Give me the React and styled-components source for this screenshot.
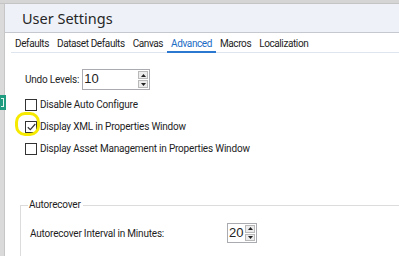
import React from "react";
import styled, { createGlobalStyle } from "styled-components";

const Global = createGlobalStyle`
  html, body { margin: 0; padding: 0; background: #ffffff; }
  body { width: 399px; height: 256px; overflow: hidden; font-family: Roboto, "Noto Sans", sans-serif; color: #1e1e1e; }
  * { box-sizing: border-box; }
`;

const Page = styled.div`
  width: 399px;
  height: 256px;
  display: flex;
  flex-direction: column;
  overflow: hidden;
`;

const TopStrip = styled.div`
  height: 4px;
  background: #d5d5d5;
  border-bottom: 1px solid #c4c4c4;
  flex: none;
`;

const Body = styled.div`
  flex: 1;
  display: flex;
  min-height: 0;
`;

const SideStrip = styled.div`
  width: 4px;
  flex: none;
  background: #dadada;
  display: flex;
  flex-direction: column;
  padding-top: 91px;
`;

const AppIcon = styled.div`
  width: 6px;
  height: 15px;
  background: #1f9c80;
  padding: 3px 0 3px 1px;
  z-index: 1;
  & > span { display: block; height: 100%; width: 3px; border: 1px solid #e3f5ef; border-left: none; }
`;

const Dialog = styled.div`
  flex: 1;
  display: flex;
  flex-direction: column;
  border-left: 1px solid #c6c6c6;
  background: #ffffff;
`;

const TitleBar = styled.div`
  height: 29px;
  flex: none;
  background: #eef2f8;
  border-bottom: 1px solid #c5c9cf;
  display: flex;
  align-items: center;
  padding-left: 17px;
  font-family: "Noto Sans", sans-serif;
  font-size: 14.5px;
  color: #262626;
`;

const TabStrip = styled.div`
  display: flex;
  margin: 3px 0 0 6px;
  height: 17px;
  border-bottom: 1px solid #dfe5ef;
`;

const Tab = styled.div`
  padding: 0 4px;
  font-size: 10px;
  letter-spacing: -0.4px;
  line-height: 15px;
  color: ${(p) => (p.$active ? "#1a6bc4" : "#1e1e1e")};
  border-bottom: 2px solid ${(p) => (p.$active ? "#2a78cf" : "transparent")};
  margin-bottom: -1px;
  white-space: nowrap;
`;

const Content = styled.div`
  display: flex;
  flex-direction: column;
  padding: 16px 0 0 20px;
`;

const FieldRow = styled.div`
  display: flex;
  align-items: center;
  gap: 3px;
  font-size: 10px;
  letter-spacing: -0.2px;
`;

const SpinBox = styled.div`
  width: ${(p) => p.$w}px;
  height: ${(p) => p.$h}px;
  border: 1px solid #a9abb0;
  display: flex;
  background: #fff;
`;

const SpinValue = styled.div`
  flex: 1;
  font-size: ${(p) => p.$fs}px;
  letter-spacing: 0;
  line-height: 1;
  padding: 2px 0 0 1px;
  color: #222;
  font-family: "Liberation Sans", "Noto Sans", sans-serif;
`;

const SpinButtons = styled.div`
  width: 11px;
  display: flex;
  flex-direction: column;
  gap: 1px;
  padding: 1px 1px 1px 0;
`;

const SpinBtn = styled.div`
  flex: 1;
  background: #ececec;
  border: 1px solid #b9b9b9;
  display: flex;
  align-items: center;
  justify-content: center;
`;

const Arrow = ({ up }) => (
  <svg width="5" height="3" viewBox="0 0 5 3">
    <path d={up ? "M0 3 L2.5 0 L5 3 Z" : "M0 0 L2.5 3 L5 0 Z"} fill="#222" />
  </svg>
);

const Spin = ({ value, w, h, fs }) => (
  <SpinBox $w={w} $h={h}>
    <SpinValue $fs={fs}>{value}</SpinValue>
    <SpinButtons>
      <SpinBtn><Arrow up /></SpinBtn>
      <SpinBtn><Arrow /></SpinBtn>
    </SpinButtons>
  </SpinBox>
);

const CheckList = styled.div`
  display: flex;
  flex-direction: column;
  gap: 9px;
  margin-top: 8px;
`;

const CheckRow = styled.label`
  display: flex;
  align-items: center;
  gap: 3px;
  font-size: 10px;
  letter-spacing: -0.2px;
  line-height: 13px;
  position: relative;
`;

const Box = styled.span`
  width: 12px;
  height: 12px;
  border: 1px solid #333;
  background: #fff;
  display: flex;
  align-items: center;
  justify-content: center;
  flex: none;
`;

const Highlight = styled.span`
  position: absolute;
  left: -10px;
  top: -8px;
  width: 25px;
  height: 24px;
  border: 3px solid #f5ea00;
  border-radius: 10px;
  pointer-events: none;
`;

const Check = ({ checked, highlight, children }) => (
  <CheckRow>
    {highlight && <Highlight />}
    <Box>
      {checked && (
        <svg width="9" height="8" viewBox="0 0 9 8">
          <path d="M0.8 4.2 L3.3 6.6 L8.3 1" fill="none" stroke="#333" strokeWidth="1.2" />
        </svg>
      )}
    </Box>
    <span>{children}</span>
  </CheckRow>
);

const Group = styled.fieldset`
  margin: 44px 0 0 15px;
  padding: 12px 0 20px 9px;
  border: none;
  border-top: 1px solid #dcdcdc;
  border-left: 1px solid #dcdcdc;
  font-size: 10px;
  letter-spacing: -0.2px;
`;

const Legend = styled.legend`
  padding: 0 2px 0 1px;
  margin-left: -2px;
  font-size: 10px;
  line-height: 12px;
`;

const GroupRow = styled.div`
  display: flex;
  align-items: center;
  & > span { width: 197px; }
`;

export default function App() {
  const tabs = ["Defaults", "Dataset Defaults", "Canvas", "Advanced", "Macros", "Localization"];
  return (
    <Page>
      <Global />
      <TopStrip />
      <Body>
        <SideStrip>
          <AppIcon><span /></AppIcon>
        </SideStrip>
        <Dialog>
          <TitleBar>User Settings</TitleBar>
          <TabStrip>
            {tabs.map((t) => (
              <Tab key={t} $active={t === "Advanced"}>{t}</Tab>
            ))}
          </TabStrip>
          <Content>
            <FieldRow>
              <span>Undo Levels:</span>
              <Spin value="10" w={68} h={21} fs={13} />
            </FieldRow>
            <CheckList>
              <Check>Disable Auto Configure</Check>
              <Check checked highlight>Display XML in Properties Window</Check>
              <Check>Display Asset Management in Properties Window</Check>
            </CheckList>
          </Content>
          <Group>
            <Legend>Autorecover</Legend>
            <GroupRow>
              <span>Autorecover Interval in Minutes:</span>
              <Spin value="20" w={30} h={20} fs={13} />
            </GroupRow>
          </Group>
        </Dialog>
      </Body>
    </Page>
  );
}
